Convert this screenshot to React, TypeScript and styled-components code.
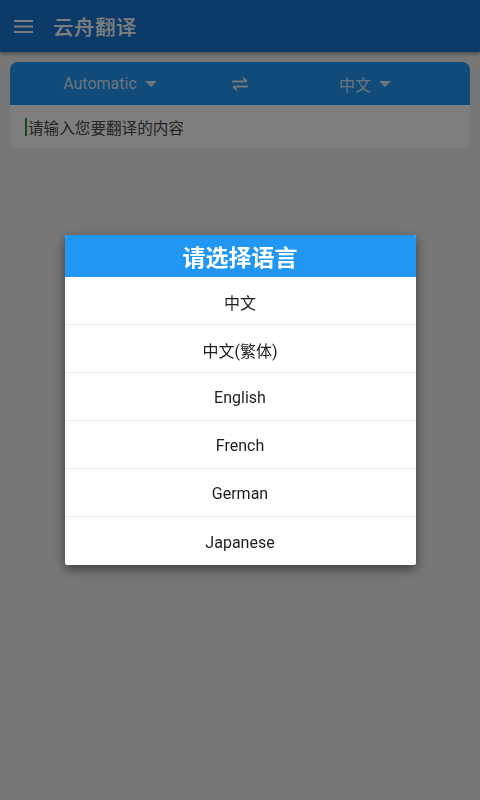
import React from 'react';
import styled, { createGlobalStyle } from 'styled-components';

const GlobalStyle = createGlobalStyle`
  html, body {
    margin: 0;
    padding: 0;
    background: #eeeeee;
    font-family: Roboto, "Noto Sans CJK SC", sans-serif;
  }
  #root {
    min-height: 800px;
  }
`;

const Screen = styled.div`
  width: 480px;
  height: 800px;
  background: #eeeeee;
  display: flex;
  flex-direction: column;
  overflow: hidden;
`;

const AppBar = styled.header`
  height: 52px;
  flex-shrink: 0;
  background: #1976d2;
  box-shadow: 0 2px 4px rgba(0, 0, 0, 0.35);
  display: flex;
  align-items: center;
  padding: 0 14px;
  gap: 19px;
  color: #ffffff;
`;

const Title = styled.h1`
  margin: 0;
  font-size: 20.5px;
  font-weight: 500;
  letter-spacing: 0.5px;
  font-family: "Noto Sans CJK SC", sans-serif;
`;

const Card = styled.section`
  margin: 10px 10px 0;
  border-radius: 8px;
  overflow: hidden;
  background: #ffffff;
`;

const LangBar = styled.div`
  height: 43px;
  background: #2196f3;
  display: grid;
  grid-template-columns: 1fr 60px 1fr;
  align-items: center;
  color: rgba(255, 255, 255, 0.82);
`;

const LangPicker = styled.div<{ $shift: number }>`
  display: flex;
  align-items: center;
  justify-content: center;
  gap: 8px;
  font-size: 16px;
  transform: translateX(${(p) => p.$shift}px);
`;

const Caret = styled.span`
  width: 0;
  height: 0;
  border-left: 6px solid transparent;
  border-right: 6px solid transparent;
  border-top: 6px solid currentColor;
`;

const SwapButton = styled.div`
  display: flex;
  align-items: center;
  justify-content: center;
`;

const InputArea = styled.div`
  height: 43px;
  display: flex;
  align-items: center;
  padding: 0 15px;
  background: #fdfdfd;
`;

const Cursor = styled.span`
  width: 2px;
  height: 18px;
  background: #1a9a40;
  margin-right: 1px;
`;

const Placeholder = styled.span`
  font-size: 15.6px;
  color: #4a4a4a;
  font-family: "Noto Sans CJK SC", sans-serif;
`;

const Scrim = styled.div`
  position: fixed;
  inset: 0;
  width: 480px;
  height: 800px;
  background: rgba(0, 0, 0, 0.5);
  display: flex;
  align-items: center;
  justify-content: center;
`;

const Dialog = styled.div`
  width: 351px;
  background: #ffffff;
  border-radius: 2px;
  box-shadow: 0 4px 12px rgba(0, 0, 0, 0.5);
  overflow: hidden;
`;

const DialogHeader = styled.div`
  height: 42px;
  background: #2196f3;
  color: #ffffff;
  display: flex;
  align-items: center;
  justify-content: center;
  font-size: 23px;
  font-weight: 700;
  font-family: "Noto Sans CJK SC", sans-serif;
`;

const Option = styled.div<{ $last?: boolean }>`
  height: 48px;
  display: flex;
  align-items: center;
  justify-content: center;
  padding-top: 2px;
  font-size: 16px;
  color: #1e1e1e;
  border-bottom: ${(p) => (p.$last ? 'none' : '1px solid #eeeeee')};
  box-sizing: border-box;
`;

const languages = ['中文', '中文(繁体)', 'English', 'French', 'German', 'Japanese'];

const MenuIcon = () => (
  <svg width="20" height="16" viewBox="0 0 20 16">
    <rect x="0" y="2" width="19" height="2" fill="currentColor" />
    <rect x="0" y="7.5" width="19" height="2" fill="currentColor" />
    <rect x="0" y="13" width="19" height="2" fill="currentColor" />
  </svg>
);

const SwapIcon = () => (
  <svg width="18" height="16" viewBox="0 0 18 16" fill="none" stroke="currentColor" strokeWidth="1.8">
    <path d="M1 5.5h15M12 2l4 3.5" />
    <path d="M17 10.5H2M6 14l-4-3.5" />
  </svg>
);

export default function App() {
  return (
    <>
      <GlobalStyle />
      <Screen>
        <AppBar>
          <MenuIcon />
          <Title>云舟翻译</Title>
        </AppBar>
        <Card>
          <LangBar>
            <LangPicker $shift={0}>
              Automatic <Caret />
            </LangPicker>
            <SwapButton>
              <SwapIcon />
            </SwapButton>
            <LangPicker $shift={-5}>
              中文 <Caret />
            </LangPicker>
          </LangBar>
          <InputArea>
            <Cursor />
            <Placeholder>请输入您要翻译的内容</Placeholder>
          </InputArea>
        </Card>
      </Screen>
      <Scrim>
        <Dialog>
          <DialogHeader>请选择语言</DialogHeader>
          {languages.map((lang, i) => (
            <Option key={lang} $last={i === languages.length - 1}>
              {lang}
            </Option>
          ))}
        </Dialog>
      </Scrim>
    </>
  );
}
